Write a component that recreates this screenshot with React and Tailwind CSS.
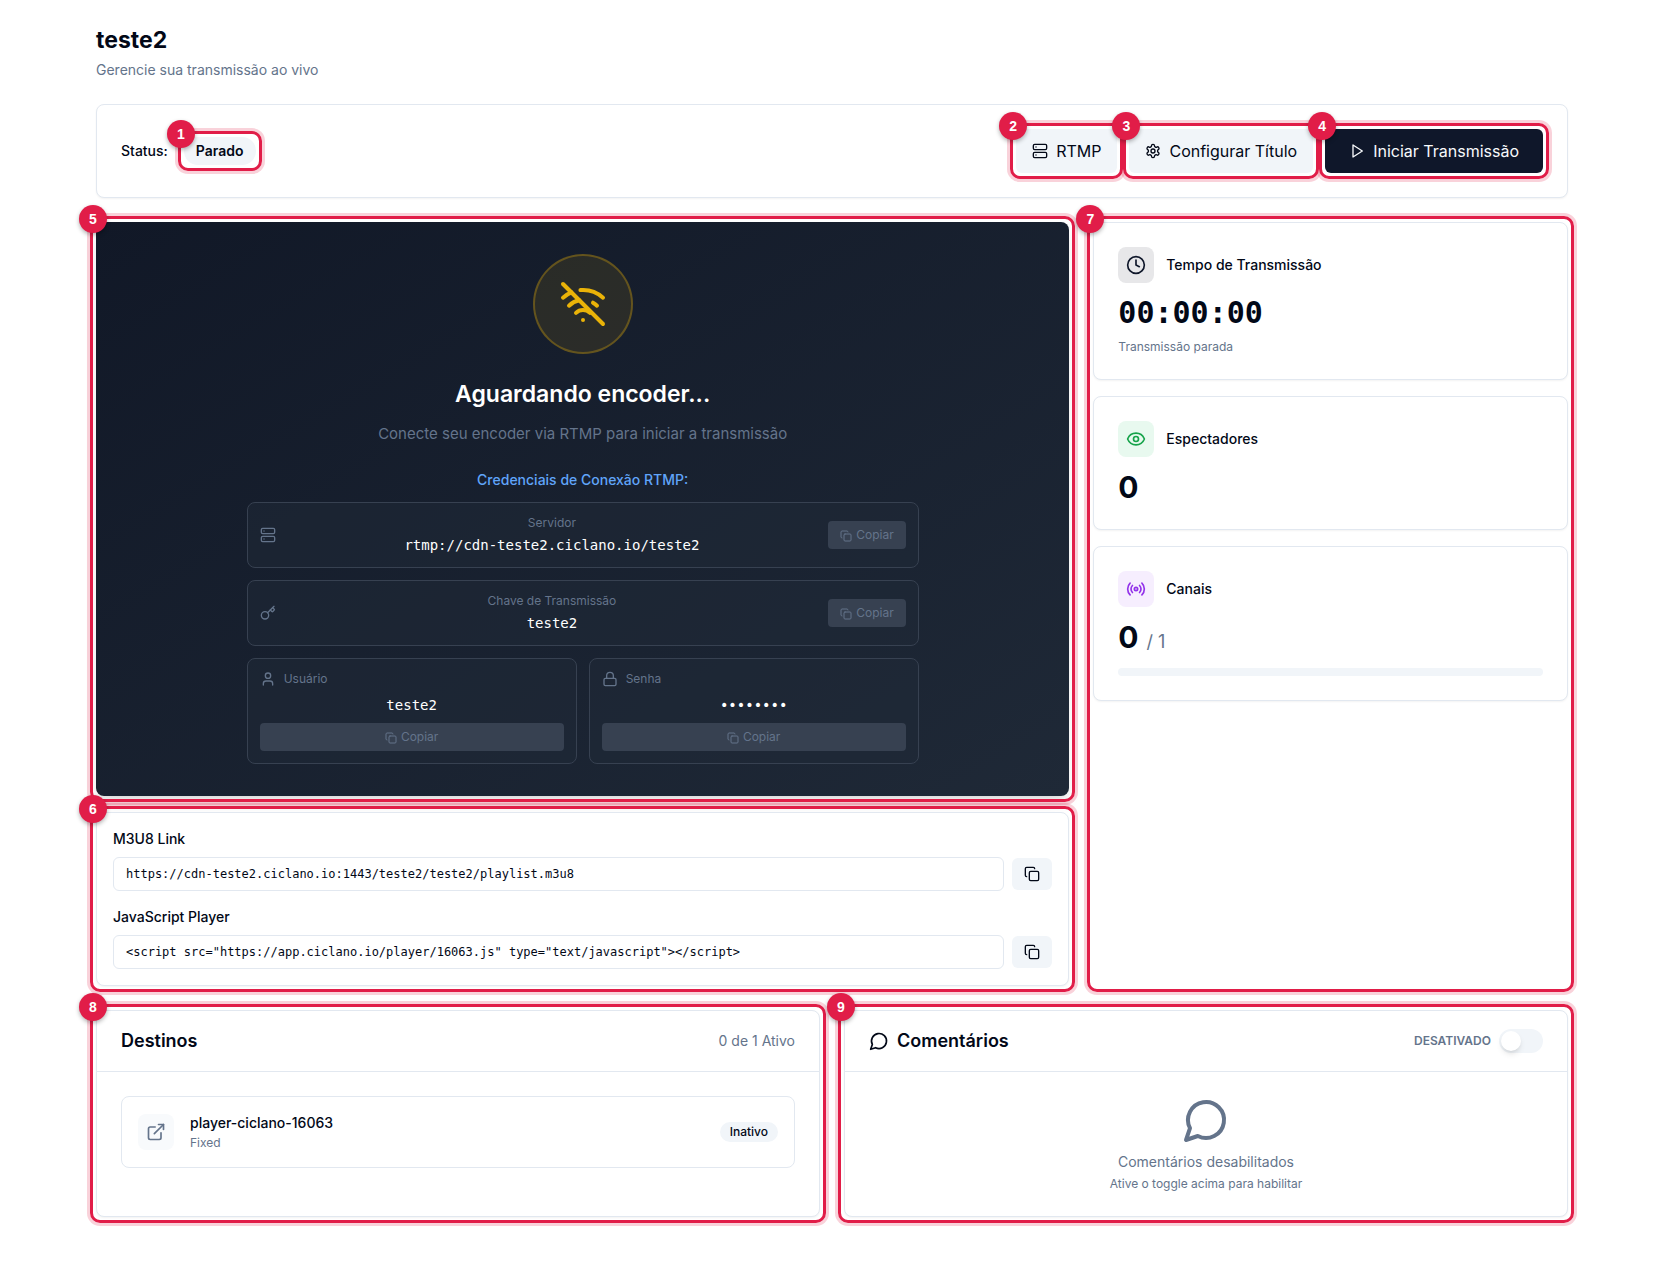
import React from "react";
import { Server, WifiOff, Key, User, Lock, Copy, Clock, Eye, Radio, ExternalLink } from "lucide-react";

const card = "rounded-lg border border-[#e2e8f0] bg-white shadow-xs";
const mono = "font-['DejaVu_Sans_Mono',monospace]";

/* Numbered highlight drawn around its content. */
function Callout({ n, className = "", children }) {
  return (
    <div className={"relative " + className}>
      {children}
      <span className="pointer-events-none absolute -inset-1.5 z-10 rounded-[10px] border-[3px] border-[#e11d48] shadow-[0_0_0_3px_rgba(225,29,72,0.2)]" />
      <span className="absolute -top-[17px] -left-[17px] z-20 flex size-7 items-center justify-center rounded-full bg-[#e11d48] font-['Liberation_Sans',sans-serif] text-sm font-bold text-white shadow-[0_2px_4px_rgba(0,0,0,0.3)]">
        {n}
      </span>
    </div>
  );
}

function StrokeIcon({ className, children }) {
  return (
    <svg
      viewBox="0 0 24 24"
      fill="none"
      stroke="currentColor"
      strokeWidth="2"
      strokeLinecap="round"
      strokeLinejoin="round"
      aria-hidden="true"
      className={className}
    >
      {children}
    </svg>
  );
}

function ChatBubble({ className }) {
  return (
    <StrokeIcon className={className}>
      <path d="M7.9 20A9 9 0 1 0 4 16.1L2 22Z" />
    </StrokeIcon>
  );
}

function PlayIcon({ className }) {
  return (
    <StrokeIcon className={className}>
      <polygon points="6 3 20 12 6 21 6 3" />
    </StrokeIcon>
  );
}

function GearIcon({ className }) {
  return (
    <StrokeIcon className={className}>
      <path d="M12.22 2h-.44a2 2 0 0 0-2 2v.18a2 2 0 0 1-1 1.73l-.43.25a2 2 0 0 1-2 0l-.15-.08a2 2 0 0 0-2.73.73l-.22.38a2 2 0 0 0 .73 2.73l.15.1a2 2 0 0 1 1 1.72v.51a2 2 0 0 1-1 1.74l-.15.09a2 2 0 0 0-.73 2.73l.22.38a2 2 0 0 0 2.73.73l.15-.08a2 2 0 0 1 2 0l.43.25a2 2 0 0 1 1 1.73V20a2 2 0 0 0 2 2h.44a2 2 0 0 0 2-2v-.18a2 2 0 0 1 1-1.73l.43-.25a2 2 0 0 1 2 0l.15.08a2 2 0 0 0 2.73-.73l.22-.39a2 2 0 0 0-.73-2.73l-.15-.08a2 2 0 0 1-1-1.74v-.5a2 2 0 0 1 1-1.74l.15-.09a2 2 0 0 0 .73-2.73l-.22-.38a2 2 0 0 0-2.73-.73l-.15.08a2 2 0 0 1-2 0l-.43-.25a2 2 0 0 1-1-1.73V4a2 2 0 0 0-2-2z" />
      <circle cx="12" cy="12" r="3" />
    </StrokeIcon>
  );
}

function CopyButton({ className = "" }) {
  return (
    <button
      type="button"
      className={"rounded bg-[#374151] px-3 py-1.5 text-center text-xs text-[#64748b] " + className}
    >
      <Copy className="mr-1 inline size-3" />
      Copiar
    </button>
  );
}

function CredentialRow({ icon: Icon, label, value }) {
  return (
    <div className="flex items-center gap-3 rounded-lg border border-[#374151] bg-[#1f2937]/50 p-3">
      <Icon className="size-4 shrink-0" />
      <div className="min-w-0 flex-1 text-center">
        <p className="text-xs">{label}</p>
        <p className={"mt-1 text-sm text-white " + mono}>{value}</p>
      </div>
      <CopyButton />
    </div>
  );
}

function CredentialBox({ icon: Icon, label, value }) {
  return (
    <div className="flex flex-col gap-2 rounded-lg border border-[#374151] bg-[#1f2937]/50 p-3">
      <div className="flex items-center gap-2">
        <Icon className="size-4" />
        <span className="text-xs">{label}</span>
      </div>
      <p className={"text-center text-sm text-white " + mono}>{value}</p>
      <CopyButton className="w-full" />
    </div>
  );
}

function LinkField({ id, label, value }) {
  return (
    <div>
      <label htmlFor={id} className="block text-sm font-medium">
        {label}
      </label>
      <div className="mt-2 flex items-center gap-2">
        <input
          id={id}
          readOnly
          defaultValue={value}
          className={"min-w-0 flex-1 rounded-md border border-[#e2e8f0] bg-white px-3 py-2 text-xs " + mono}
        />
        <button
          type="button"
          aria-label={"Copiar " + label}
          className="flex h-8 w-10 items-center justify-center rounded-md bg-[#f1f5f9]"
        >
          <Copy className="size-4" />
        </button>
      </div>
    </div>
  );
}

function StatCard({ icon: Icon, tint, label, children }) {
  return (
    <section className={card + " p-6"}>
      <div className="mb-3 flex items-center gap-3">
        <span className={"rounded-lg p-2 " + tint}>
          <Icon className="size-5" />
        </span>
        <h3 className="text-sm font-medium">{label}</h3>
      </div>
      {children}
    </section>
  );
}

export default function App() {
  return (
    <main className="mx-auto max-w-screen-2xl px-8 py-6 font-['Inter',sans-serif] text-[#020817]">
      <header>
        <h1 className="text-[23px] leading-8 font-bold">teste2</h1>
        <p className="mt-1 text-sm text-[#64748b]">Gerencie sua transmissão ao vivo</p>
      </header>

      <section className={card + " mt-6 flex flex-wrap items-center justify-between gap-4 p-6"}>
        <div className="flex items-center gap-4">
          <span className="text-sm font-medium">Status:</span>
          <Callout n={1}>
            <span className="block rounded-full bg-[#f1f5f9] px-3 py-1 text-sm font-semibold">Parado</span>
          </Callout>
        </div>
        <div className="flex flex-wrap gap-3">
          <Callout n={2}>
            <button type="button" className="flex h-11 items-center gap-2 rounded-md bg-[#f1f5f9] px-4">
              <Server className="size-4" />
              RTMP
            </button>
          </Callout>
          <Callout n={3}>
            <button type="button" className="flex h-11 items-center gap-2 rounded-md bg-[#f1f5f9] px-4">
              <GearIcon className="size-4" />
              Configurar Título
            </button>
          </Callout>
          <Callout n={4}>
            <button
              type="button"
              className="flex h-11 items-center gap-2 rounded-md bg-[#0f172a] px-6 text-[#f8fafc]"
            >
              <PlayIcon className="size-4" />
              Iniciar Transmissão
            </button>
          </Callout>
        </div>
      </section>

      <div className="mt-6 grid gap-6 lg:grid-cols-3">
        <div className="flex flex-col gap-4 lg:col-span-2">
          <Callout n={5}>
            <section className="flex flex-col items-center rounded-lg bg-linear-to-br from-[#111827] to-[#1f2937] p-8 text-[#64748b] shadow-lg">
              <span className="rounded-full border-2 border-[#eab308]/30 bg-[#eab308]/10 p-6 text-[#eab308]">
                <WifiOff className="size-12" />
              </span>
              <h2 className="mt-6 text-[23px] leading-8 font-semibold text-white">Aguardando encoder...</h2>
              <p className="mt-3 text-[15px] leading-6">Conecte seu encoder via RTMP para iniciar a transmissão</p>
              <h3 className="mt-6 text-sm font-medium text-[#60a5fa]">Credenciais de Conexão RTMP:</h3>
              <div className="mt-3 flex w-full max-w-2xl flex-col gap-3">
                <CredentialRow icon={Server} label="Servidor" value="rtmp://cdn-teste2.ciclano.io/teste2" />
                <CredentialRow icon={Key} label="Chave de Transmissão" value="teste2" />
                <div className="grid grid-cols-2 gap-3">
                  <CredentialBox icon={User} label="Usuário" value="teste2" />
                  <CredentialBox icon={Lock} label="Senha" value="••••••••" />
                </div>
              </div>
            </section>
          </Callout>

          <Callout n={6}>
            <section className={card + " flex flex-col gap-4 p-4"}>
              <LinkField
                id="m3u8"
                label="M3U8 Link"
                value="https://cdn-teste2.ciclano.io:1443/teste2/teste2/playlist.m3u8"
              />
              <LinkField
                id="js-player"
                label="JavaScript Player"
                value={'<script src="https://app.ciclano.io/player/16063.js" type="text/javascript"></script>'}
              />
            </section>
          </Callout>
        </div>

        <Callout n={7} className="flex flex-col gap-4">
          <StatCard icon={Clock} tint="bg-[#0f172a]/10 text-[#0f172a]" label="Tempo de Transmissão">
            <p className={"text-3xl font-bold " + mono}>00:00:00</p>
            <p className="mt-2 text-xs text-[#64748b]">Transmissão parada</p>
          </StatCard>
          <StatCard icon={Eye} tint="bg-[#e8f9ef] text-[#16a34a]" label="Espectadores">
            <p className="text-3xl font-bold">0</p>
          </StatCard>
          <StatCard icon={Radio} tint="bg-[#f6eefe] text-[#9333ea]" label="Canais">
            <p className="text-3xl font-bold">
              0<span className="ml-2 text-lg font-normal text-[#64748b]">/ 1</span>
            </p>
            <div
              role="progressbar"
              aria-label="Canais em uso"
              aria-valuenow={0}
              aria-valuemin={0}
              aria-valuemax={1}
              className="mt-3 h-2 rounded-full bg-[#f1f5f9]"
            />
          </StatCard>
        </Callout>
      </div>

      <div className="mt-6 grid gap-6 lg:grid-cols-2">
        <Callout n={8}>
          <section className={card + " h-full"}>
            <div className="flex items-center justify-between border-b border-[#e2e8f0] px-6 py-4">
              <h2 className="text-lg font-semibold">Destinos</h2>
              <span className="text-sm text-[#64748b]">0 de 1 Ativo</span>
            </div>
            <div className="p-6">
              <div className="flex items-center gap-4 rounded-lg border border-[#e2e8f0] p-4">
                <span className="rounded-lg bg-[#f8fafc] p-2 text-[#64748b]">
                  <ExternalLink className="size-5" />
                </span>
                <div className="min-w-0 flex-1">
                  <p className="text-sm font-medium">player-ciclano-16063</p>
                  <p className="mt-0.5 text-xs text-[#64748b]">Fixed</p>
                </div>
                <span className="rounded-full bg-[#f1f5f9] px-2.5 py-0.5 text-xs font-medium">Inativo</span>
              </div>
            </div>
          </section>
        </Callout>

        <Callout n={9}>
          <section className={card + " h-full"}>
            <div className="flex items-center justify-between border-b border-[#e2e8f0] px-6 py-4">
              <h2 className="flex items-center gap-2 text-lg font-semibold">
                <ChatBubble className="size-5" />
                Comentários
              </h2>
              <div className="flex items-center gap-2">
                <label htmlFor="comments" className="text-xs font-semibold text-[#64748b] uppercase">
                  Desativado
                </label>
                <input
                  id="comments"
                  type="checkbox"
                  role="switch"
                  className="flex h-6 w-11 appearance-none rounded-full bg-[#f1f5f9] p-0.5 before:size-5 before:rounded-full before:bg-white before:shadow-md checked:justify-end checked:bg-[#0f172a]"
                />
              </div>
            </div>
            <div className="flex flex-col items-center p-6 text-[#64748b]">
              <ChatBubble className="size-12" />
              <p className="mt-2 text-sm">Comentários desabilitados</p>
              <p className="mt-1 text-xs">Ative o toggle acima para habilitar</p>
            </div>
          </section>
        </Callout>
      </div>
    </main>
  );
}
